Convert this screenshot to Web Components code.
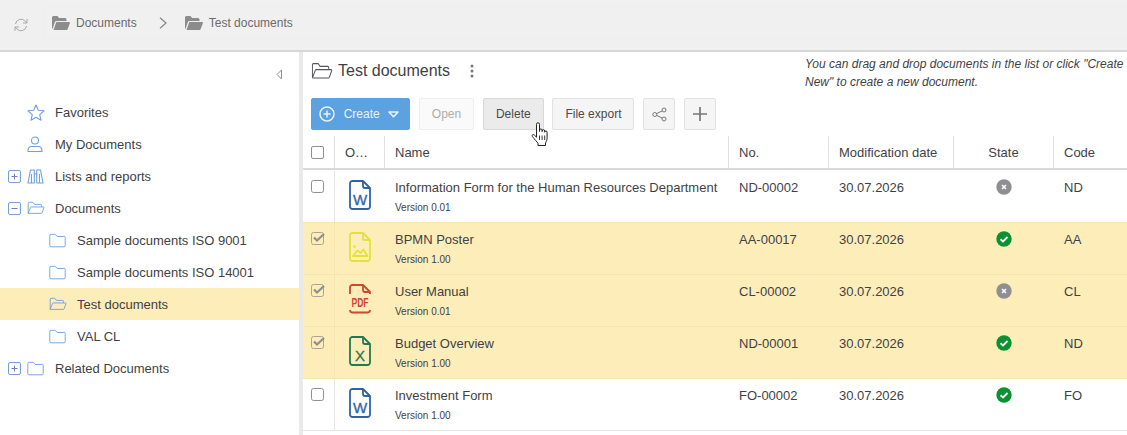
<!DOCTYPE html>
<html>
<head>
<meta charset="utf-8">
<title>Test documents</title>
<style>
  html, body { margin: 0; height: 100%; overflow: hidden; background: #fff; }
  body { font-family: "Liberation Sans", Arial, sans-serif; font-size: 13px; color: #3f3f46; }
  doc-row:first-child { --row-line: transparent; }
  doc-row[checked], doc-row[checked] + doc-row { --row-line: #f6e5ae; }
</style>
</head>
<body>
<app-shell>
  <top-bar slot="top"></top-bar>
  <side-tree slot="side">
    <tree-item icon="star" label="Favorites"></tree-item>
    <tree-item icon="user" label="My Documents"></tree-item>
    <tree-item icon="binoculars" toggle="plus" label="Lists and reports"></tree-item>
    <tree-item icon="open" toggle="minus" label="Documents"></tree-item>
    <tree-item icon="folder" sub label="Sample documents ISO 9001"></tree-item>
    <tree-item icon="folder" sub label="Sample documents ISO 14001"></tree-item>
    <tree-item icon="open" sub selected label="Test documents"></tree-item>
    <tree-item icon="folder" sub label="VAL CL"></tree-item>
    <tree-item icon="folder" toggle="plus" label="Related Documents"></tree-item>
  </side-tree>
  <doc-panel slot="main">
    <doc-row type="word" name="Information Form for the Human Resources Department" version="Version 0.01" no="ND-00002" state="off" code="ND"></doc-row>
    <doc-row type="image" checked name="BPMN Poster" version="Version 1.00" no="AA-00017" state="on" code="AA"></doc-row>
    <doc-row type="pdf" checked name="User Manual" version="Version 0.01" no="CL-00002" state="off" code="CL"></doc-row>
    <doc-row type="excel" checked name="Budget Overview" version="Version 1.00" no="ND-00001" state="on" code="ND"></doc-row>
    <doc-row type="word" name="Investment Form" version="Version 1.00" no="FO-00002" state="on" code="FO"></doc-row>
  </doc-panel>
</app-shell>

<script>
const FOLDER_OPEN = 'M1.5 14.5V2.5a1 1 0 0 1 1-1h5l2 2.5h8a1 1 0 0 1 1 1V7M1.5 14.5 4.5 7.5a1 1 0 0 1 1-.5h15.6a.6.6 0 0 1 .6.8l-2.5 6.2a1 1 0 0 1-1 .6H2.2a.8.8 0 0 1-.7-.6z';
const FOLDER_SHUT = 'M1 3a1.5 1.5 0 0 1 1.5-1.5h5.2l2.3 2.6h7.5A1.5 1.5 0 0 1 20 5.6v9a1.5 1.5 0 0 1-1.5 1.5h-16A1.5 1.5 0 0 1 1 14.600z';

customElements.define('app-shell', class extends HTMLElement {
  constructor() {
    super();
    const root = this.attachShadow({ mode: 'open' });
    root.innerHTML = `
    <style>
      :host { display: flex; flex-direction: column; height: 435px; width: 1127px; position: relative; }
      .body { flex: 1; display: flex; min-height: 0; }
      .gutter { width: 4px; background: #e9e9e9; }
      .cursor { position: absolute; left: 531px; top: 122px; }
    </style>
    <slot name="top"></slot>
    <div class="body">
      <slot name="side"></slot>
      <div class="gutter"></div>
      <slot name="main"></slot>
    </div>
    <svg class="cursor" width="19" height="25" viewBox="0 0 19 25">
      <path d="M5.500 2.300a1.500 1.500 0 0 1 3 0V9.500V8.300a1.300 1.300 0 0 1 2.600 0v1.200-.5a1.300 1.300 0 0 1 2.600 0v1.200a1.200 1.200 0 0 1 2.400 0v5.300c0 2.800-.7 4-1.600 5.400v2.600H7v-2.200c-1.300-1.600-3.200-3.900-5.600-6.700-1-1.300.6-2.800 1.800-1.700l2.300 2.300z" fill="#fff" stroke="#222" stroke-width="1" stroke-linejoin="round"/>
      <path d="M8.500 13.500v4.500M11.100 13.500v4.500M13.700 13.500v4.500" stroke="#222" stroke-width=".9" fill="none"/>
    </svg>
    `;
  }
});

customElements.define('top-bar', class extends HTMLElement {
  constructor() {
    super();
    const root = this.attachShadow({ mode: 'open' });
    const folder = `<svg width="18" height="14" viewBox="0 0 19 14" preserveAspectRatio="none"><path d="M0 12.500V1.500A1.500 1.500 0 0 1 1.500 0h4.200l1.800 2h6.300A1.500 1.500 0 0 1 15.300 3.500V5H4.800a2 2 0 0 0-1.800 1.200L.6 12.800A1 1 0 0 1 0 12.500z" fill="#8c8c8c"/><path d="M4.500 6h13.700c.6 0 .9.500.7 1l-2.300 6a1.500 1.500 0 0 1-1.400 1H1.600z" fill="#8c8c8c"/></svg>`;
    root.innerHTML = `
    <style>
      :host { display: flex; align-items: flex-start; height: 50px; background: #f0f0f0; border-bottom: 2px solid #d6d6d6; flex: none; padding: 0 0 0 14px; color: #6b6b6b; font-size: 12px; }
      .refresh { margin-top: 18px; flex: none; }
      .crumbs { display: flex; align-items: center; height: 33px; box-sizing: border-box; margin: 6px 0 0 15px; padding-left: 8px; flex: 1; border: 1px solid #eeeeee; border-right: 0; border-radius: 3px 0 0 3px; }
      .crumb { display: flex; align-items: center; gap: 6px; }
      .sep { margin: 0 18px 0 22px; }
    </style>
    <svg class="refresh" width="14" height="14" viewBox="0 0 14 14" fill="none" stroke="#a8a8a8" stroke-width="1">
      <path d="M1.500 6A5.600 5.600 0 0 1 11.300 3.200L13 5M13 1v4H9"/><path d="M12.500 8A5.600 5.600 0 0 1 2.700 10.800L1 9M1 13V9h4"/>
    </svg>
    <div class="crumbs">
      <span class="crumb">${folder}<span>Documents</span></span>
      <svg class="sep" width="8" height="12" viewBox="0 0 8 12" fill="none" stroke="#8c8c8c" stroke-width="1.300"><path d="M1 .8 7 6 1 11.200"/></svg>
      <span class="crumb">${folder}<span>Test documents</span></span>
    </div>
    `;
  }
});

customElements.define('side-tree', class extends HTMLElement {
  constructor() {
    super();
    const root = this.attachShadow({ mode: 'open' });
    root.innerHTML = `
    <style>
      :host { display: block; width: 299px; flex: none; background: #fff; }
      .collapse { display: flex; justify-content: flex-end; align-items: flex-start; padding: 17px 16px 0 0; height: 27px; }
    </style>
    <div class="collapse">
      <svg width="7" height="11" viewBox="0 0 7 11" fill="none" stroke="#8c8ca0" stroke-width="1"><path d="M5.500 1v9L1 5.500z"/></svg>
    </div>
    <slot></slot>
    `;
  }
});

customElements.define('tree-item', class extends HTMLElement {
  constructor() {
    super();
    const root = this.attachShadow({ mode: 'open' });
    const icons = {
      star: `<svg width="18" height="17" viewBox="0 0 18 17"><path d="M9 1l2.300 5.300 5.700.5-4.300 3.800 1.300 5.600L9 13.300l-5 2.900 1.300-5.600L1 6.800l5.700-.5z"/></svg>`,
      user: `<svg width="16" height="16" viewBox="0 0 16 16"><circle cx="8" cy="4.500" r="3.500"/><path d="M1 15.500v-1.500a3.500 3.500 0 0 1 3.500-3.500h7a3.500 3.500 0 0 1 3.500 3.500v1.500z"/></svg>`,
      binoculars: `<svg width="17" height="15" viewBox="0 0 17 15"><path d="M3.500 1H7.300V14H1zM9.700 1H13.500L16 14H9.700zM7.300 5h2.400M4.500 5V14M12.500 5V14"/></svg>`,
      folder: `<svg width="17" height="15" viewBox="0 0 21 17.500" preserveAspectRatio="none"><path d="${FOLDER_SHUT}"/></svg>`,
      open: `<svg width="18" height="14" viewBox="0 0 23 16.500" preserveAspectRatio="none"><path d="${FOLDER_OPEN}"/></svg>`
    };
    const toggle = this.getAttribute('toggle');
    const sub = this.hasAttribute('sub');
    const box = toggle
      ? `<svg class="toggle" width="13" height="13" viewBox="0 0 13 13"><rect x=".5" y=".5" width="12" height="12" rx="1.500"/><path d="M3.500 6.500h6${toggle === 'plus' ? 'M6.500 3.500v6' : ''}"/></svg>`
      : '';
    root.innerHTML = `
    <style>
      :host { display: block; height: 32px; }
      :host([selected]) { background: #fdedb9; }
      .row { display: flex; align-items: center; height: 100%; position: relative; padding-left: ${sub ? 49 : 27}px; }
      .toggle { position: absolute; left: 8px; top: 10px; }
      .ic { width: 28px; flex: none; display: flex; align-items: center; }
      svg { fill: none; stroke: #6f9fe0; stroke-width: 1.100; stroke-linejoin: round; }
      .toggle { stroke-width: 1; }
      .toggle path { stroke: #7a7ac0; }
      .label { color: #3f3f46; }
    </style>
    <div class="row">
      ${box}
      <span class="ic">${icons[this.getAttribute('icon')]}</span>
      <span class="label">${this.getAttribute('label')}</span>
    </div>
    `;
  }
});

customElements.define('tool-button', class extends HTMLElement {
  constructor() {
    super();
    const root = this.attachShadow({ mode: 'open' });
    root.innerHTML = `
    <style>
      :host { display: inline-flex; align-items: center; justify-content: center; height: 32px; box-sizing: border-box; border: 1px solid #e2e2e2; background: #f5f5f5; color: #4a4a4a; border-radius: 2px; padding: 0 12px; flex: none; font-size: 12px; }
      :host([disabled]) { background: #fafafa; color: #adadad; border-color: #eeeeee; }
      :host([hover]) { background: #ebebeb; border-color: #d8d8d8; }
      :host([primary]) { background: #5ca2e0; border-color: #5ca2e0; color: #e8f2fb; padding: 0 9.700px 0 7px; gap: 8.500px; width: 99px; }
      :host([square]) { padding: 0; width: 32px; }
    </style>
    <slot></slot>
    `;
  }
});

customElements.define('doc-panel', class extends HTMLElement {
  constructor() {
    super();
    const root = this.attachShadow({ mode: 'open' });
    root.innerHTML = `
    <style>
      :host { display: block; flex: 1; min-width: 0; background: #fff; --cols: 31px 50px 344px 100px 125px 100px 1fr; }
      .head { display: flex; justify-content: space-between; height: 46px; padding-left: 8px; }
      .title { display: flex; align-items: center; height: 38px; font-size: 16px; color: #3f3f46; }
      .title svg { margin-right: 5px; }
      .title .dots { margin: 0 0 0 20px; }
      .hint { width: 322px; font-size: 12px; font-style: italic; line-height: 18px; color: #3f3f46; padding-top: 3px; }
      .tools { display: flex; gap: 8.800px; padding-left: 8px; height: 38px; }
      .thead { display: grid; grid-template-columns: var(--cols); height: 32px; border-bottom: 2px solid #d9d9d9; color: #3f3f46; }
      .thead > div { display: flex; align-items: center; padding-left: 10px; border-left: 1px solid #e2e2e2; }
      .thead > .first { border-left: 0; padding-left: 8px; }
      .thead > .c { justify-content: center; padding-left: 0; }
      .cb { width: 11px; height: 11px; border: 1px solid #8f8f96; border-radius: 2px; background: #fff; }
    </style>
    <div class="head">
      <div class="title">
        <svg width="22" height="18" viewBox="0 0 23 16.500" preserveAspectRatio="none" fill="none" stroke="#55555c" stroke-width="1"><path d="${FOLDER_OPEN}"/></svg>
        <span>Test documents</span>
        <svg class="dots" width="4" height="14" viewBox="0 0 4 14" fill="#777"><circle cx="2" cy="2" r="1.500"/><circle cx="2" cy="7" r="1.500"/><circle cx="2" cy="12" r="1.500"/></svg>
      </div>
      <div class="hint">You can drag and drop documents in the list or click "Create New" to create a new document.</div>
    </div>
    <div class="tools">
      <tool-button primary>
        <svg width="16" height="16" viewBox="0 0 16 16" fill="none" stroke="#e8f2fb" stroke-width="1.500"><circle cx="8" cy="8" r="7"/><path d="M4.500 8h7M8 4.500v7"/></svg>
        <span>Create</span>
        <svg width="11" height="7" viewBox="0 0 11 7" fill="none" stroke="#e8f2fb" stroke-width="1.600" stroke-linejoin="round"><path d="M1 1h9L5.500 5.800z"/></svg>
      </tool-button>
      <tool-button disabled>Open</tool-button>
      <tool-button hover>Delete</tool-button>
      <tool-button>File export</tool-button>
      <tool-button square>
        <svg width="15" height="15" viewBox="0 0 15 15" fill="none" stroke="#777" stroke-width="1"><circle cx="2.800" cy="7.500" r="2"/><circle cx="12" cy="3" r="2"/><circle cx="12" cy="12" r="2"/><path d="M4.600 6.600 10.200 3.900M4.600 8.400l5.600 2.700"/></svg>
      </tool-button>
      <tool-button square>
        <svg width="14" height="14" viewBox="0 0 14 14" stroke="#777" stroke-width="1.700"><path d="M0 7h14M7 0v14"/></svg>
      </tool-button>
    </div>
    <div class="thead">
      <div class="first"><span class="cb"></span></div>
      <div>O…</div>
      <div>Name</div>
      <div>No.</div>
      <div>Modification date</div>
      <div class="c">State</div>
      <div>Code</div>
    </div>
    <slot></slot>
    `;
  }
});

customElements.define('file-icon', class extends HTMLElement {
  constructor() {
    super();
    const root = this.attachShadow({ mode: 'open' });
    const type = this.getAttribute('type');
    const colour = { word: '#2e63ac', image: '#e3e337', pdf: '#d2452f', excel: '#1f7a52' }[type];
    const letter = (ch) => `<text x="11" y="25" text-anchor="middle" font-size="15" font-family="Liberation Sans, sans-serif" fill="${colour}" stroke="${colour}" stroke-width=".3">${ch}</text>`;
    const inner = {
      word: letter('W'),
      excel: letter('X'),
      image: `<circle cx="5.500" cy="14.500" r="1.200" fill="${colour}" stroke="none"/><path d="M4 24l4.500-5.500 3 2.500 3-3.500 4 6.500z" stroke-width="1.800"/>`,
      pdf: ''
    }[type];
    const outline = type === 'pdf'
      ? `<path d="M1 10V3.500A2.500 2.500 0 0 1 3.500 1H14l7 7v2"/><path d="M14 1v5a2 2 0 0 0 2 2h5"/><path d="M1 26c0 1.600 1 2.500 2.500 2.500h15c1.500 0 2.500-.9 2.500-2.500"/><text transform="translate(11 23) scale(.78 1.150)" text-anchor="middle" font-size="11" font-family="Liberation Sans, sans-serif" font-weight="700" fill="${colour}" stroke="none">PDF</text>`
      : `<path d="M14 1H3.500A2.500 2.500 0 0 0 1 3.500v23A2.500 2.500 0 0 0 3.500 29h15a2.500 2.500 0 0 0 2.500-2.500V8z"/><path d="M14 1v5a2 2 0 0 0 2 2h5"/>`;
    root.innerHTML = `
    <style>:host { display: block; width: 22px; height: 30px; } svg { display: block; }</style>
    <svg width="22" height="30" viewBox="0 0 22 30" fill="none" stroke="${colour}" stroke-width="1.800" stroke-linejoin="round">${outline}${inner}</svg>
    `;
  }
});

customElements.define('state-icon', class extends HTMLElement {
  constructor() {
    super();
    const root = this.attachShadow({ mode: 'open' });
    const on = this.getAttribute('state') === 'on';
    root.innerHTML = `
    <style>:host { display: block; width: 16px; height: 16px; } svg { display: block; }</style>
    <svg width="16" height="16" viewBox="0 0 16 16">
      <circle cx="8" cy="8" r="7.700" fill="${on ? '#0a9132' : '#8e8e93'}"/>
      ${on
        ? '<path d="M4.500 8.300 7 10.500l4.500-4.500" fill="none" stroke="#fff" stroke-width="1.800"/>'
        : '<path d="M6 6l4 4M10 6l-4 4" fill="none" stroke="#fff" stroke-width="1.500"/>'}
    </svg>
    `;
  }
});

customElements.define('doc-row', class extends HTMLElement {
  constructor() {
    super();
    const root = this.attachShadow({ mode: 'open' });
    const get = a => this.getAttribute(a);
    const checked = this.hasAttribute('checked');
    root.innerHTML = `
    <style>
      :host { display: grid; grid-template-columns: var(--cols); height: 52px; box-sizing: border-box; border-top: 1px solid var(--row-line, #e6e6e6); color: #3f3f46; }
      :host([checked]) { background: #fdedb9; }
      :host(:last-child) { height: 53px; border-bottom: 1px solid #e6e6e6; }
      .cell { padding: 9px 0 0 11px; line-height: 15px; }
      .pick { padding: 9px 0 0 8px; }
      .type { padding: 9px 0 0 14px; border-left: 1px solid #e6e6e6; }
      :host([checked]) .type { border-left-color: #f6e5ae; }
      .ver { font-size: 10px; margin-top: 7px; line-height: 12px; }
      .state { display: flex; justify-content: center; padding: 8px 0 0 1px; }
      .box { display: block; }
    </style>
    <div class="pick">
      <svg class="box" width="14" height="13" viewBox="0 0 14 13">
        <rect x=".5" y=".5" width="12" height="12" rx="2" fill="${checked ? 'none' : '#fff'}" stroke="${checked ? '#a8a49a' : '#8f8f96'}"/>
        ${checked ? '<path d="M3 5.500 6 8.500 13 2" fill="none" stroke="#8f8f8f" stroke-width="2.200"/>' : ''}
      </svg>
    </div>
    <div class="type"><file-icon type="${get('type')}"></file-icon></div>
    <div class="cell"><div>${get('name')}</div><div class="ver">${get('version')}</div></div>
    <div class="cell">${get('no')}</div>
    <div class="cell">30.07.2026</div>
    <div class="state"><state-icon state="${get('state')}"></state-icon></div>
    <div class="cell">${get('code')}</div>
    `;
  }
});
</script>
</body>
</html>
